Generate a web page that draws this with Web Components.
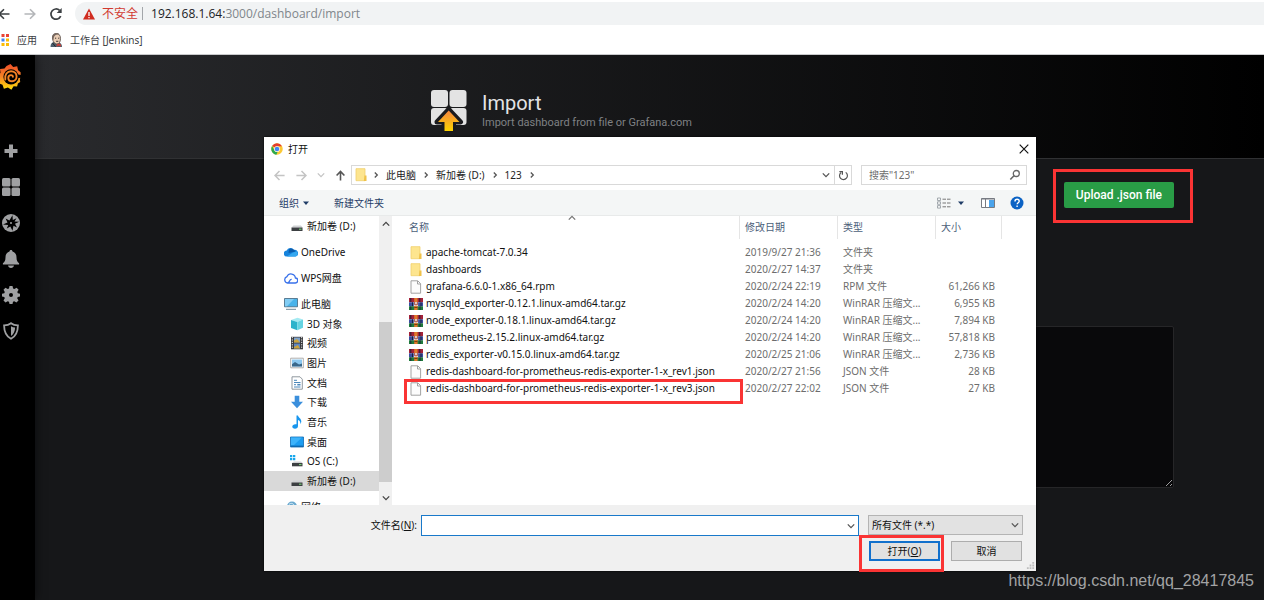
<!DOCTYPE html>
<html lang="zh-CN">
<head>
<meta charset="utf-8">
<title>Import - Grafana</title>
<style>
  html, body { margin: 0; min-height: 100%; background: #161719; }
  body { font: 10px/16px "Noto Sans", "Noto Sans CJK SC", sans-serif; overflow: hidden; }
</style>
</head>
<body>
<import-page></import-page>
<script>
const ICONS = {
  back: ['0 0 14 14', '<path d="M12.500 7H2.500M7 2.200 2.200 7l4.800 4.800" fill="none" stroke="currentColor" stroke-width="1.600"/>'],
  forward: ['0 0 14 14', '<path d="M1.500 7h10M7 2.200 11.800 7 7 11.800" fill="none" stroke="currentColor" stroke-width="1.600"/>'],
  up: ['0 0 14 14', '<path d="M7 12.500V3M2.800 7 7 2.600 11.200 7" fill="none" stroke="currentColor" stroke-width="1.700"/>'],
  reload: ['0 0 14 14', '<path d="M11.700 9.200A5.100 5.100 0 1 1 10.600 3.400" fill="none" stroke="currentColor" stroke-width="1.700"/><path d="M12.700 1v5H7.700z" fill="currentColor"/>'],
  refresh: ['0 0 12 12', '<path d="M8.400 2.600A4.300 4.300 0 1 1 3.400 2.700" fill="none" stroke="currentColor" stroke-width="1.300"/><path d="M1.500 1.800h3.300v3.400" fill="none" stroke="currentColor" stroke-width="1.300"/>'],
  warn: ['0 0 12 12', '<path d="M6 .5 12 11.500H0z" fill="#d02c20"/><path d="M6 4v4M6 9v1.300" stroke="#fff" stroke-width="1.300"/>'],
  apps: ['0 0 12 12', '<g><path d="M0 0h3v3H0zM4.500 0h3v3h-3zM9 0h3v3H9z" fill="#ea4335"/><path d="M0 4.500h3v3H0z" fill="#34a853"/><path d="M4.500 4.500h3v3h-3z" fill="#4285f4"/><path d="M9 4.500h3v3H9zM4.500 9h3v3h-3zM9 9h3v3H9z" fill="#fbbc05"/><path d="M0 9h3v3H0z" fill="#34a853"/></g>'],
  jenkins: ['0 0 13 14', '<path d="M1 14c0-3 1-4 3-5l5 0c2 1 3.500 2 3.500 5z" fill="#4b5f6e"/><path d="M3 5c0-3 2-4.500 4-4.500s4 1.500 4 5-1.500 5.500-3.600 5.500S3 8.500 3 5z" fill="#e9cdb5" stroke="#4f443d" stroke-width=".8"/><path d="M2.600 6C2 2 4 .2 7 .3c1.500 0 2.500.5 3 1.200C7 1 5 2 4.300 4.500L4 7z" fill="#766860"/><path d="M5.500 5.200h1.200M8.600 5.200h1.200M6.600 8.300h2.200" stroke="#3f3531"/><path d="M7 11.500l2.300-1 2.200 1v2.300l-2-1-2.300 1z" fill="#c2413a"/><path d="M3 10l3 3.600" stroke="#222"/>'],
  grafana: ['0 0 24 26', '<defs><linearGradient id="g" x1="0" y1="0" x2="0" y2="1"><stop offset="0" stop-color="#f04e28"/><stop offset=".5" stop-color="#f58426"/><stop offset="1" stop-color="#ffde08"/></linearGradient></defs><path d="M12.500 0l2.700 3.100 4-.8.9 4 2.500 2 .1 3.800-.8 3.500.3 2.500-2.300 1.300-.8 3.200-3.500-.3-2.200 3.400-3.500-2.200-4 1.200-1.400-4-4-1.500.9-4L0 12l2.500-3.200L2 5l4.500-.6L8.500 2z" fill="url(#g)"/><circle cx="13" cy="12.800" r="7.600" fill="#000"/><path d="M20 10.500l3.500.5v2.700l-3.500.3z" fill="#000"/><path d="M7.300 15.500C6.400 10.500 9.300 7.200 13 7.200c3.300 0 5.600 2.300 5.600 5.300 0 2.700-2 4.700-4.500 4.700-2.200 0-3.800-1.400-3.800-3.300 0-1.600 1.200-2.800 2.700-2.800 1.200 0 1.900.7 1.900 1.700" fill="none" stroke="#f58426" stroke-width="1.900" stroke-linecap="round"/>'],
  plus: ['0 0 18 18', '<path d="M7 2.500h4V7h4.500v4H11v4.500H7V11H2.500V7H7z" fill="currentColor"/>'],
  grid: ['0 0 18 18', '<g fill="currentColor"><rect width="8.500" height="8.500" rx="1.500"/><rect x="9.500" width="8.500" height="8.500" rx="1.500"/><rect y="9.500" width="8.500" height="8.500" rx="1.500"/><rect x="9.500" y="9.500" width="8.500" height="8.500" rx="1.500"/></g>'],
  compass: ['0 0 18 18', '<circle cx="9" cy="9" r="9" fill="currentColor"/><path d="M10.500 1.300l.3 4.700 3.700-1.700-2 3.200 4.700.2-4.200 2 2 3.700-3.500-1.700-1 5-2.200-4.300-3.500 2 1.400-3.500-5.200-.3 4.500-2.200-1.900-3.900 3.800 1.900z" fill="#000"/><circle cx="9" cy="9" r="1" fill="currentColor"/>'],
  bell: ['0 0 18 18', '<path d="M9 0c.9 0 1.500.6 1.500 1.500 2.700.7 4 2.900 4 5.800 0 3.500.9 4.700 2.600 6v1.200H.9v-1.200c1.700-1.300 2.600-2.500 2.600-6 0-2.900 1.300-5.100 4-5.800C7.500.6 8.100 0 9 0zM6 15.500h6c-.3 1.600-1.400 2.500-3 2.500s-2.700-.9-3-2.500z" fill="currentColor"/>'],
  gear: ['0 0 18 18', '<path fill-rule="evenodd" d="M7.500 0h3l.6 2.500 1.300.5 2.200-1.300 2 2.100L15.300 6l.5 1.200 2.200.5v2.800l-2.300.5-.5 1.300 1.300 2.100-2.100 2.100-2.200-1.300-1.200.5-.5 2.300h-3L7 15.700l-1.300-.5-2.200 1.300-2-2.100 1.300-2.100-.5-1.300L0 10.500V7.700l2.300-.5L2.800 6 1.500 3.800l2-2.100L5.700 3 7 2.500zM9 7a2 2 0 1 0 0 4 2 2 0 0 0 0-4z" fill="currentColor"/>'],
  shield: ['0 0 18 18', '<path d="M9 1.200c2 1.500 4.300 2.100 6.900 2.200 0 6.500-1.900 10.600-6.900 13.400C4 14 2.100 9.900 2.100 3.400 4.700 3.300 7 2.700 9 1.200z" fill="none" stroke="currentColor" stroke-width="1.800"/><path d="M9 4.200c1.200.8 2.700 1.200 4.100 1.300-.2 4-1.400 6.700-4.100 8.600z" fill="currentColor"/>'],
  import: ['0 0 36 42', '<defs><linearGradient id="i" x1="0" y1="0" x2="0" y2="1"><stop offset="0" stop-color="#f58640"/><stop offset="1" stop-color="#ffd500"/></linearGradient></defs><g fill="#e3e3e3"><rect x="0" y="0" width="17" height="17" rx="3"/><rect x="18.500" y="0" width="17" height="17" rx="3"/><rect x="0" y="18" width="17" height="17" rx="3"/><rect x="18.500" y="18" width="17" height="17" rx="3"/></g><path d="M17.700 19.500 29.500 32H22.500v9h-9.500v-9H6z" fill="none" stroke="#1b1b1e" stroke-width="5" stroke-linejoin="round"/><path d="M17.700 20.500 28.500 32H22v9h-8.500v-9H7z" fill="url(#i)"/>'],
  chrome: ['0 0 24 24', '<circle cx="12" cy="12" r="11.500" fill="#fcc934"/><path d="M12 .5A11.500 11.500 0 0 1 22 6.300H12A5.700 5.700 0 0 0 7 9.200L2.400 5.600A11.500 11.500 0 0 1 12 .5z" fill="#e33b2e"/><path d="M2.200 6 7 14.800c1.500 2.400 3.500 3 6 3L10.800 23.400A11.500 11.500 0 0 1 2.200 6z" fill="#2da94f"/><circle cx="12" cy="12" r="5.700" fill="#fff"/><circle cx="12" cy="12" r="4.600" fill="#4285f4"/>'],
  close: ['0 0 10 10', '<path d="M.7.700l8.600 8.600M9.300.7.700 9.300" stroke="currentColor" stroke-width="1.200"/>'],
  down: ['0 0 8 8', '<path d="M.8 2.400 4 5.600l3.200-3.200" fill="none" stroke="currentColor" stroke-width="1.300"/>'],
  top: ['0 0 8 8', '<path d="M.8 5.600 4 2.400l3.200 3.200" fill="none" stroke="currentColor" stroke-width="1.300"/>'],
  right: ['0 0 8 8', '<path d="M2.800 1.500 5.300 4 2.800 6.500" fill="none" stroke="currentColor" stroke-width="1.300"/>'],
  caret: ['0 0 8 8', '<path d="M1 2.500h6L4 6z" fill="currentColor"/>'],
  search: ['0 0 12 12', '<circle cx="7.300" cy="4.500" r="3" fill="none" stroke="currentColor" stroke-width="1.300"/><path d="M5 6.800 1.300 10.500" stroke="currentColor" stroke-width="1.600"/>'],
  view: ['0 0 14 12', '<path d="M.5 1h3v2.500h-3zM.5 4.800h3v2.500h-3zM.5 8.600h3v2.500h-3z" fill="none" stroke="#9aa0a6" stroke-width=".9"/><path d="M5.500 2.200H9M10 2.200h3.500M5.500 6H9M10 6h3.500M5.500 9.800H9M10 9.800h3.500" stroke="#777"/>'],
  pane: ['0 0 14 12', '<path d="M.5 1.500h13v9H.5z" fill="#fff" stroke="#777b82"/><path d="M.5 2h13M4.500 2v8.500" stroke="#777b82"/><path d="M8 3h5v7H8z" fill="#4aa4ec"/>'],
  help: ['0 0 14 14', '<circle cx="7" cy="7" r="6.500" fill="#0b62c4"/><path d="M5 5.400c0-1.300.8-2.100 2.100-2.100s2.100.8 2.100 1.900c0 1.500-2 1.700-2 3.100M7.100 9.500v1.600" fill="none" stroke="#fff" stroke-width="1.400"/>'],
  folder: ['0 0 14 14', '<path d="M2 .7h9v12H2z" fill="#fde58f"/><path d="M2 .7h9v12H2z" fill="none" stroke="#f0cf6c" stroke-width=".8"/><path d="M10.500 7.500h2v5.500H9.800z" fill="#f0c24a"/>'],
  file: ['0 0 14 14', '<path d="M2 .8h6.800l2.800 2.800v9.600H2z" fill="#fcfcfc" stroke="#999" stroke-width=".9"/><path d="M8.500 1v3h3" fill="none" stroke="#999" stroke-width=".9"/>'],
  rar: ['0 0 14 14', '<path d="M0 1h14v4.300H0z" fill="#a32138"/><path d="M0 5.300h14v4H0z" fill="#3b4d9f"/><path d="M0 9.300h14V13H0z" fill="#1f7a3c"/><path d="M1.800 1v4M10.800 1v4M3.500 5.300v4M12 5.300v4M1.800 9.300V13M11 9.300V13" stroke="#151b35" stroke-width=".9"/><path d="M5.200 1h3.400v12H5.200z" fill="#e0792b"/><path d="M4.800 5h4.300v4H4.800z" fill="#f3e8e0"/><path d="M5.700 5v2.800h2.600V5" fill="none" stroke="#a1443b"/><path d="M5.300 10.500h3.200" stroke="#7b3e13"/>'],
  drive: ['0 0 14 14', '<path d="M3.500 6.500h7.500L12.500 8.500H1.500z" fill="#cfd1d3"/><path d="M1.500 8.500h11V12h-11z" fill="#3c3f42"/><path d="M9 10.200h2.500" stroke="#7de07d"/>'],
  osdrive: ['0 0 14 14', '<path d="M0 1h2.300v2.300H0zM3 1h2.300v2.300H3zM0 4h2.300v2.300H0zM3 4h2.300v2.300H3z" fill="#18a7ec"/><path d="M4 7.500h7L12.500 9H2z" fill="#cfd1d3"/><path d="M2 9h10.500v3.300H2z" fill="#3c3f42"/><path d="M9 10.600h2.500" stroke="#7de07d"/>'],
  onedrive: ['0 0 14 14', '<path d="M3 11.500a3 3 0 0 1-.3-6A4 4 0 0 1 9.800 4.800a3.400 3.400 0 0 1 1.700 6.700z" fill="#1683dc"/><path d="M5 4.200a4 4 0 0 1 4.800.6L12 6.500 4.500 8z" fill="#0b5cad"/><path d="M3 11.500 8.500 7.700 12.500 6.300c2.200 2 1.200 5.200-1.300 5.200z" fill="#35a8f0"/>'],
  wps: ['0 0 14 14', '<path d="M3.600 12h7.500a2.500 2.500 0 0 0 .3-5A4.400 4.400 0 0 0 3 5.600 3.300 3.300 0 0 0 3.600 12c2.600-.2 1.400-4 4.100-3.600" fill="none" stroke="#3a72ea" stroke-width="1.300"/>'],
  pc: ['0 0 14 14', '<path d="M.5 1.500h13v8.300H.5z" fill="#49b3ea" stroke="#46667c" stroke-width=".8"/><path d="M1 2h9L3 9.300H1z" fill="#82cdf4"/><path d="M2 12.300h10" stroke="#6d8797"/>'],
  cube: ['0 0 14 14', '<path d="M1 3 7.500.8 13 2.600 7.300 5z" fill="#a5eaf2"/><path d="M1 3l6.300 2v8.300L1 11z" fill="#2cb3cb"/><path d="M7.300 5 13 2.600v8.100l-5.700 2.600z" fill="#66d4e2"/>'],
  video: ['0 0 14 14', '<path d="M1 .8h12v12.500H1z" fill="#3a3b3f"/><path d="M2.300 1v12M11.700 1v12" stroke="#eee" stroke-dasharray="1.200 1.200"/><path d="M4 1.500h6v5H4z" fill="#7fa2c9"/><path d="M4 7.500h6v5H4z" fill="#5e86c4"/><path d="M4 4.500 7 3l3 3.500H4zM4 11l4-2 2 3.500H4z" fill="#cda33b"/>'],
  photo: ['0 0 14 14', '<path d="M.7 2.200h12.600v9.600H.7z" fill="#fff" stroke="#999" stroke-width=".8"/><path d="M2 3.500h10v7H2z" fill="#8cc8f0"/><path d="M2 8.300 5 6l4 2.500 3-1v3H2z" fill="#3a688b"/>'],
  doc: ['0 0 14 14', '<path d="M2 .8h8l2.300 2.400v10H2z" fill="#fff" stroke="#858d94" stroke-width=".9"/><path d="M4 4.300h3M4 6.500h6.500M4 8.700h2M4 11h6.500" stroke="#4a87ba"/><path d="M7.300 8.700h3.200" stroke="#4a87ba" stroke-width="1.600"/>'],
  download: ['0 0 14 14', '<path d="M4.700.8h4.600v6H13l-6 6.500-6-6.500h3.700z" fill="#3b8fdc"/>'],
  music: ['0 0 14 14', '<path d="M6.500.5H8c.2 2 3.500 3 3.300 6.200-.1 1-.5 1.700-1 2.200C10.600 6.500 9.500 5.500 8 5v6c0 1.700-1.300 2.700-3 2.700s-2.700-.8-2.700-2.100c0-1.700 2-2.900 4.200-2.300z" fill="#1896ee"/>'],
  desktop: ['0 0 14 14', '<path d="M.5 2h13v10H.5z" fill="#1d9df1" stroke="#0f6bb3" stroke-width=".8"/><path d="M1 2.500h11L4 10H1z" fill="#3eb3fa"/><path d="M1 11.200h12" stroke="#0d5c9c"/>'],
  network: ['0 0 14 14', '<circle cx="8" cy="6.500" r="5" fill="#6ba9cf"/><path d="M5 4.500c2-2 4-1 5 .5M4 7.500h8" stroke="#d8eefa" fill="none"/><path d="M0 6h6v5H0z" fill="#2e7cab"/>'],
  grip: ['0 0 10 10', '<path d="M7 1h2v2H7zM4 4h2v2H4zM7 4h2v2H7zM1 7h2v2H1zM4 7h2v2H4zM7 7h2v2H7z" fill="#bdbdbd"/>']
};

function define(name, html, setup) {
  const template = document.createElement('template');
  template.innerHTML = html;
  customElements.define(name, class extends HTMLElement {
    connectedCallback() {
      if (this.shadowRoot) return;
      this.attachShadow({ mode: 'open' }).append(template.content.cloneNode(true));
      if (setup) setup(this, this.shadowRoot);
    }
  });
}

const RESET = `
  *, *::before { box-sizing: border-box; }
  button, input, select, textarea { font: inherit; color: inherit; margin: 0; padding: 0; border: 0; border-radius: 0; background: none; outline: 0; }
  button { display: inline-flex; align-items: center; justify-content: center; }
  a { color: inherit; text-decoration: none; }
`;

define('ui-icon', `<style>
  :host { display: inline-block; flex: none; width: 14px; height: 14px; }
  svg { display: block; width: 100%; height: 100%; }
</style>`, (host, root) => {
  const [box, art] = ICONS[host.getAttribute('name')];
  root.innerHTML += `<svg viewBox="${box}" aria-hidden="true">${art}</svg>`;
});

define('red-mark', `<style>
  :host { position: absolute; box-sizing: border-box; border: 3px solid #fa3434; pointer-events: none; }
</style>`);

define('browser-bar', `<style>${RESET}
  :host { display: block; background: #fff; border-bottom: 1px solid #c9cacc; color: #3c4043; overflow: hidden; }
  .nav { display: flex; align-items: center; gap: 12px; height: 27px; margin-left: -3px; }
  .off { color: #b4b6b9; }
  .omni { flex: 1; display: flex; align-items: center; height: 23px; padding-left: 8px; background: #f1f3f4; border-radius: 12px 0 0 12px; font-size: 12px; }
  .omni ui-icon { width: 12px; height: 12px; }
  .unsafe { margin-left: 7px; color: #d23a30; }
  .rule { width: 1px; height: 13px; margin: 0 8px 0 4px; background: #a3a6aa; }
  .url { color: #80868b; font-family: "Open Sans", sans-serif; }
  b { font-weight: 400; color: #202124; }
  .marks { display: flex; align-items: center; gap: 12px; height: 27px; padding-bottom: 1px; margin-left: -3px; }
  .marks a { display: flex; align-items: center; gap: 7px; }
  .apps ui-icon { width: 12px; height: 12px; margin-right: 1px; }
</style>
<div class="nav">
  <button aria-label="后退"><ui-icon name="back"></ui-icon></button>
  <button class="off" aria-label="前进"><ui-icon name="forward"></ui-icon></button>
  <button aria-label="刷新"><ui-icon name="reload"></ui-icon></button>
  <div class="omni"><ui-icon name="warn"></ui-icon><span class="unsafe">不安全</span><span class="rule"></span><span class="url"><b>192.168.1.64:</b>3000/dashboard/import</span></div>
</div>
<div class="marks">
  <a class="apps" href="#apps"><ui-icon name="apps"></ui-icon>应用</a>
  <a href="#jenkins"><ui-icon name="jenkins"></ui-icon>工作台 [Jenkins]</a>
</div>`);

define('side-menu', `<style>${RESET}
  :host { display: flex; flex-direction: column; align-items: flex-start; gap: 18px; width: 35px; padding: 9px 0 0 2px; background: #000; color: #9fa0a2; box-sizing: border-box; z-index: 1; box-shadow: 0 0 12px #0009; }
  a, ui-icon { display: block; }
  ui-icon { width: 18px; height: 18px; }
  .logo { margin: 0 0 34px -4px; }
  .logo ui-icon { width: 24px; height: 26px; }
</style>
<a class="logo" href="#home" aria-label="Home"><ui-icon name="grafana"></ui-icon></a>`, (host, root) => {
  for (const [name, label] of [['plus', 'Create'], ['grid', 'Dashboards'], ['compass', 'Explore'], ['bell', 'Alerting'], ['gear', 'Configuration'], ['shield', 'Server Admin']])
    root.innerHTML += `<a href="#${name}" aria-label="${label}"><ui-icon name="${name}"></ui-icon></a>`;
});

define('page-header', `<style>
  :host { display: flex; align-items: center; gap: 15px; height: 104px; box-sizing: border-box; padding: 8px 90px 0 396px; background: linear-gradient(90deg, #292a2d, #000); border-bottom: 1px solid #303133; font-family: Roboto, sans-serif; }
  ui-icon { width: 36px; height: 42px; }
  h1 { margin: 0; font-size: 20px; line-height: 24px; font-weight: 400; color: #e3e3e6; }
  div { font-size: 11px; line-height: 16px; color: #7f8184; }
</style>
<ui-icon name="import"></ui-icon><section><h1><slot name="title"></slot></h1><div><slot></slot></div></section>`);

define('import-form', `<style>${RESET}
  :host { display: flex; flex-direction: column; align-items: flex-end; gap: 118px; padding: 23px 90px 0 395px; font-family: Roboto, sans-serif; }
  button { height: 26px; padding: 0 12px; background: #299c46; color: #fff; border-radius: 2px; font-size: 12px; font-weight: 500; }
  textarea { display: block; width: 100%; height: 162px; background: #09090b; border: 1px solid #262628; border-radius: 2px; color-scheme: dark; }
</style>
<button>Upload .json file</button>
<textarea aria-label="JSON"></textarea>`);

define('address-row', `<style>${RESET}
  :host { display: flex; align-items: center; height: 20px; padding: 0 9px; color: #222; }
  .go { gap: 9px; display: flex; align-items: center; margin-right: 4px; color: #555; }
  .go ui-icon { width: 13px; height: 13px; }
  .off { color: #c4c4c4; }
  ui-icon.s, .go ui-icon.s { width: 8px; height: 8px; }
  .path { flex: 1; display: flex; align-items: center; height: 20px; border: 1px solid #d9d9d9; padding-left: 2px; color: #555; }
  nav { flex: 1; display: flex; align-items: center; gap: 6px; }
  nav > ui-icon:first-child { margin-right: -2px; }
  nav a { color: #222; }
  .re { width: 17px; height: 18px; border-left: 1px solid #d9d9d9; margin-left: 4px; }
  .re ui-icon { width: 11px; height: 11px; }
  .find { display: flex; align-items: center; width: 166px; height: 20px; margin-left: 9px; border: 1px solid #d9d9d9; padding: 0 5px 0 7px; color: #666; }
  input { flex: 1; min-width: 0; }
  input::placeholder { color: #6d6d6d; opacity: 1; }
  .find ui-icon { width: 12px; height: 12px; }
</style>
<div class="go">
  <button class="off" aria-label="后退"><ui-icon name="back"></ui-icon></button>
  <button class="off" aria-label="前进"><ui-icon name="forward"></ui-icon></button>
  <button class="off" aria-label="最近"><ui-icon class="s" name="down"></ui-icon></button>
  <button aria-label="上移"><ui-icon name="up"></ui-icon></button>
</div>
<div class="path">
  <nav aria-label="路径"><ui-icon name="folder"></ui-icon><ui-icon class="s" name="right"></ui-icon><a href="#pc">此电脑</a><ui-icon class="s" name="right"></ui-icon><a href="#d">新加卷 (D:)</a><ui-icon class="s" name="right"></ui-icon><a href="#123">123</a><ui-icon class="s" name="right"></ui-icon></nav>
  <button aria-label="展开"><ui-icon class="s" name="down"></ui-icon></button>
  <button class="re" aria-label="刷新"><ui-icon name="refresh"></ui-icon></button>
</div>
<div class="find"><input type="search" aria-label="搜索" placeholder='搜索"123"'><ui-icon name="search"></ui-icon></div>`);

define('command-bar', `<style>${RESET}
  :host { display: flex; align-items: center; height: 26px; margin-top: 5px; padding: 0 12px 0 15px; background: #f4f6f6; border-bottom: 1px solid #e8eaea; color: #1f3c66; box-sizing: border-box; }
  button { gap: 3px; }
  .new { margin: 0 auto 0 24px; }
  .caret { width: 8px; height: 8px; }
  .view { gap: 6px; margin-right: 16px; }
  .pane { margin-right: 15px; }
</style>
<button>组织 <ui-icon class="caret" name="caret"></ui-icon></button>
<button class="new">新建文件夹</button>
<button class="view" aria-label="视图"><ui-icon name="view"></ui-icon><ui-icon class="caret" name="caret"></ui-icon></button>
<button class="pane" aria-label="预览窗格"><ui-icon name="pane"></ui-icon></button>
<button aria-label="帮助"><ui-icon name="help"></ui-icon></button>`);

define('tree-item', `<style>${RESET}
  :host { display: flex; flex: none; align-items: center; min-height: 20px; padding-left: 20px; color: #111; }
  :host([deep]) { padding-left: 26px; }
  :host([fit]) { min-height: 0; }
  :host([selected]) { background: #d9d9d9; }
  a { display: flex; align-items: center; gap: 3px; }
</style><a href="#folder"><slot></slot></a>`, (host, root) => {
  const icon = document.createElement('ui-icon');
  icon.setAttribute('name', host.getAttribute('icon'));
  root.querySelector('a').prepend(icon);
});

define('folder-tree', `<style>${RESET}
  :host { display: grid; grid-template-columns: 1fr 13px; width: 128px; overflow: hidden; }
  .items { display: flex; flex-direction: column; gap: 6px; height: 289px; overflow: hidden; }
  .group { display: grid; grid-auto-rows: 1fr; height: 197px; flex: none; }
  .bar { display: grid; grid-template-rows: 106px 160px 1fr; background: #f0f0f0; color: #444; justify-items: center; }
  .thumb { width: 100%; background: #cdcdcd; }
  .bar ui-icon { width: 8px; height: 8px; margin: 4px 0 3px; }
  .bar ui-icon:last-child { align-self: end; }
</style>
<div class="items">
  <tree-item deep icon="drive">新加卷 (D:)</tree-item>
  <tree-item icon="onedrive">OneDrive</tree-item>
  <tree-item icon="wps">WPS网盘</tree-item>
  <div class="group">
    <tree-item fit icon="pc">此电脑</tree-item>
    <tree-item fit deep icon="cube">3D 对象</tree-item>
    <tree-item fit deep icon="video">视频</tree-item>
    <tree-item fit deep icon="photo">图片</tree-item>
    <tree-item fit deep icon="doc">文档</tree-item>
    <tree-item fit deep icon="download">下载</tree-item>
    <tree-item fit deep icon="music">音乐</tree-item>
    <tree-item fit deep icon="desktop">桌面</tree-item>
    <tree-item fit deep icon="osdrive">OS (C:)</tree-item>
    <tree-item fit deep selected icon="drive">新加卷 (D:)</tree-item>
  </div>
  <tree-item icon="network">网络</tree-item>
</div>
<div class="bar"><ui-icon name="top"></ui-icon><span class="thumb"></span><ui-icon name="down"></ui-icon></div>`);

const FILES = [
  ['folder', 'apache-tomcat-7.0.34', '2019/9/27 21:36', '文件夹', ''],
  ['folder', 'dashboards', '2020/2/27 14:37', '文件夹', ''],
  ['file', 'grafana-6.6.0-1.x86_64.rpm', '2020/2/24 22:19', 'RPM 文件', '61,266 KB'],
  ['rar', 'mysqld_exporter-0.12.1.linux-amd64.tar.gz', '2020/2/24 14:20', 'WinRAR 压缩文...', '6,955 KB'],
  ['rar', 'node_exporter-0.18.1.linux-amd64.tar.gz', '2020/2/24 14:20', 'WinRAR 压缩文...', '7,894 KB'],
  ['rar', 'prometheus-2.15.2.linux-amd64.tar.gz', '2020/2/24 14:20', 'WinRAR 压缩文...', '57,818 KB'],
  ['rar', 'redis_exporter-v0.15.0.linux-amd64.tar.gz', '2020/2/25 21:06', 'WinRAR 压缩文...', '2,736 KB'],
  ['file', 'redis-dashboard-for-prometheus-redis-exporter-1-x_rev1.json', '2020/2/27 21:56', 'JSON 文件', '28 KB'],
  ['file', 'redis-dashboard-for-prometheus-redis-exporter-1-x_rev3.json', '2020/2/27 22:02', 'JSON 文件', '27 KB']
];

define('file-list', `<style>${RESET}
  :host { display: block; flex: 1; position: relative; padding: 0 34px 0 4px; color: #6d6d6d; }
  table { width: 100%; border-collapse: separate; border-spacing: 0; table-layout: fixed; }
  .date, .type { width: 98px; } .size { width: 66px; }
  th { height: 23px; padding: 0 0 2px 5px; text-align: left; font-weight: 400; color: #4c607a; border-right: 1px solid #e5e5e5; }
  th:first-child { padding-left: 13px; }
  thead::after { content: ""; display: block; height: 5px; }
  td { height: 17px; padding: 0 0 0 5px; line-height: 17px; white-space: nowrap; }
  td:first-child { padding-left: 13px; color: #111; }
  td:last-child { text-align: right; padding-right: 7px; }
  td > span { display: flex; align-items: center; gap: 3px; }
  .sort { position: absolute; left: 176px; top: -2px; width: 8px; height: 8px; color: #777; }
</style>
<ui-icon class="sort" name="top"></ui-icon>
<table><thead><tr><th>名称</th><th class="date">修改日期</th><th class="type">类型</th><th class="size">大小</th></tr></thead><tbody></tbody></table>`, (host, root) => {
  root.querySelector('tbody').innerHTML = FILES.map(([icon, name, date, type, size]) =>
    `<tr><td><span><ui-icon name="${icon}"></ui-icon>${name}</span></td><td>${date}</td><td>${type}</td><td>${size}</td></tr>`).join('');
});

define('dialog-footer', `<style>${RESET}
  :host { display: grid; grid-template-columns: 1fr 438px 155px; align-items: start; column-gap: 9px; row-gap: 5px; padding: 10px 13px 10px 0; background: #f0f0f0; color: #111; position: relative; box-sizing: border-box; }
  label { justify-self: end; margin-right: -5px; line-height: 20px; }
  .combo { display: flex; align-items: center; height: 21px; border: 1px solid #1979ca; background: #fff; padding-right: 3px; }
  .combo input { flex: 1; height: 19px; padding: 0 4px; }
  ui-icon { width: 8px; height: 8px; color: #555; }
  .pick { display: grid; align-items: center; }
  .pick > * { grid-area: 1 / 1; }
  .pick ui-icon { justify-self: end; margin-right: 4px; pointer-events: none; }
  select { appearance: none; height: 20px; border: 1px solid #b4b4b4; background: #e2e2e2; padding-left: 3px; }
  .buttons { grid-column: 3; display: grid; grid-template-columns: 1fr 1fr; gap: 11px; padding: 0 1px; }
  .buttons button { height: 20px; border: 1px solid #adadad; background: #e1e1e1; }
  .buttons .open { border: 2px solid #1170cc; }
  .grip { position: absolute; right: 1px; bottom: 1px; width: 9px; height: 9px; }
</style>
<label for="name">文件名(<u>N</u>):</label>
<div class="combo"><input id="name" type="text"><ui-icon name="down"></ui-icon></div>
<div class="pick"><select aria-label="文件类型"><option>所有文件 (*.*)</option></select><ui-icon name="down"></ui-icon></div>
<div class="buttons"><button class="open"><span>打开(<u>O</u>)</span></button><button>取消</button></div>
<ui-icon class="grip" name="grip"></ui-icon>`);

define('open-dialog', `<style>${RESET}
  :host { display: flex; flex-direction: column; position: absolute; left: 264px; top: 137px; width: 772px; background: #fff; box-shadow: 0 0 2px #000; z-index: 2; }
  header { display: flex; align-items: center; gap: 5px; height: 23px; margin-bottom: 5px; padding: 0 7px; color: #111; }
  header ui-icon { width: 12px; height: 12px; }
  header button { margin-left: auto; }
  header button ui-icon { width: 10px; height: 10px; }
  main { display: flex; height: 289px; }
  dialog-footer { height: 66px; }
  .row { left: 140px; top: 242px; width: 339px; height: 25px; }
  .ok { left: 595px; top: 398px; width: 85px; height: 37px; }
</style>
<header><ui-icon name="chrome"></ui-icon>打开<button aria-label="关闭"><ui-icon name="close"></ui-icon></button></header>
<address-row></address-row>
<command-bar></command-bar>
<main><folder-tree></folder-tree><file-list></file-list></main>
<dialog-footer></dialog-footer>
<red-mark class="row"></red-mark><red-mark class="ok"></red-mark>`);

define('import-page', `<style>
  :host { display: flex; flex-direction: column; min-height: 100vh; position: relative; background: #161719; }
  .app { flex: 1; display: flex; overflow: hidden; }
  .content { flex: 1; }
  .upload { right: 71px; top: 169px; width: 140px; height: 54px; }
  .credit { position: absolute; right: 10px; bottom: 8px; font: 16px/22px "Liberation Sans", Arial, sans-serif; color: #a2a3a4; z-index: 3; }
</style>
<browser-bar></browser-bar>
<div class="app">
  <side-menu></side-menu>
  <div class="content">
    <page-header><span slot="title">Import</span>Import dashboard from file or Grafana.com</page-header>
    <import-form></import-form>
  </div>
</div>
<open-dialog></open-dialog>
<red-mark class="upload"></red-mark>
<div class="credit">https://blog.csdn.net/qq_28417845</div>`);
</script>
</body>
</html>
